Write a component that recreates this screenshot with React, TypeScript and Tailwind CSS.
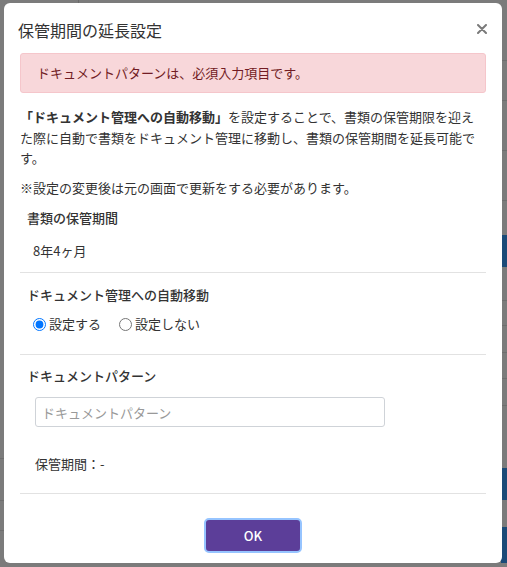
import React from "react";

export default function App() {
  return (
    <div className="relative w-[507px] h-[567px] overflow-hidden bg-[#7b7b7b] font-['Noto_Sans_CJK_JP','Noto_Sans',sans-serif] text-[#333]">
      {/* background page hints */}
      <div className="absolute left-[78px] top-0 w-px h-[3px] bg-[#6a6a6a]" />
      <div className="absolute right-0 top-[235px] w-[6px] h-[32px] bg-[#1b4a78]" />
      <div className="absolute right-0 top-[468px] w-[6px] h-[32px] bg-[#1b4a78]" />
      <div className="absolute right-0 top-[527px] w-[6px] h-[36px] bg-[#1b4a78]" />
      <div className="absolute right-0 top-[60px] w-[6px] h-px bg-[#6e6e6e]" />
      <div className="absolute right-0 top-[100px] w-[6px] h-px bg-[#6e6e6e]" />
      <div className="absolute right-0 top-[150px] w-[6px] h-px bg-[#6e6e6e]" />
      <div className="absolute right-0 top-[200px] w-[6px] h-px bg-[#6e6e6e]" />
      <div className="absolute right-0 top-[300px] w-[6px] h-px bg-[#6e6e6e]" />
      <div className="absolute right-0 top-[325px] w-[6px] h-px bg-[#6e6e6e]" />
      <div className="absolute right-0 top-[352px] w-[6px] h-px bg-[#6e6e6e]" />
      <div className="absolute right-0 top-[378px] w-[6px] h-px bg-[#6e6e6e]" />
      <div className="absolute right-0 top-[405px] w-[6px] h-px bg-[#6e6e6e]" />
      <div className="absolute left-0 top-[458px] w-[4px] h-px bg-[#6e6e6e]" />
      <div className="absolute left-0 top-[500px] w-[4px] h-px bg-[#6e6e6e]" />
      <div className="absolute left-0 top-[530px] w-[4px] h-px bg-[#6e6e6e]" />

      {/* modal */}
      <div className="relative ml-[4px] mt-[3px] w-[498px] h-[560px] bg-white rounded-[6px] flex flex-col">
        {/* header */}
        <div className="h-[50px] pl-[14px] pr-[15px] pt-[15px] flex justify-between items-start">
          <div className="text-[16px] leading-[24px] text-[#333]">保管期間の延長設定</div>
          <svg width="10" height="10" viewBox="0 0 10 10" className="mt-[5.5px]">
            <path d="M1 1 L9 9 M9 1 L1 9" stroke="#7a7a7a" strokeWidth="2" strokeLinecap="round" />
          </svg>
        </div>

        {/* body */}
        <div className="px-[16px] flex flex-col text-[13px]">
          <div className="h-[40px] border border-[#f5c6cb] bg-[#f8d7da] rounded-[3px] pl-[16px] flex items-center text-[#721c24] leading-[20px]">
            ドキュメントパターンは、必須入力項目です。
          </div>

          <p className="mt-[14px] leading-[20.5px] whitespace-nowrap">
            <span className="font-bold">「ドキュメント管理への自動移動」</span>を設定することで、書類の保管期限を迎え
            <br />
            た際に自動で書類をドキュメント管理に移動し、書類の保管期間を延長可能で
            <br />
            す。
          </p>

          <div className="mt-[9.5px] leading-[20px]">※設定の変更後は元の画面で更新をする必要があります。</div>

          <div className="mt-[10px] leading-[20px] pl-[7px] font-medium">書類の保管期間</div>
          <div className="mt-[12.5px] leading-[20px] pl-[13px]">8年4ヶ月</div>

          <div className="mt-[11.5px] h-px bg-[#e2e2e2]" />

          <div className="mt-[12px] leading-[20px] pl-[7px] font-medium">ドキュメント管理への自動移動</div>
          <div className="mt-[9px] h-[20px] pl-[13px] flex items-center">
            <label className="flex items-center">
              <input type="radio" name="auto" defaultChecked className="w-[13px] h-[13px] m-0" />
              <span className="ml-[3px]">設定する</span>
            </label>
            <label className="flex items-center ml-[18px]">
              <input type="radio" name="auto" className="w-[13px] h-[13px] m-0" />
              <span className="ml-[3px]">設定しない</span>
            </label>
          </div>

          <div className="mt-[20px] h-px bg-[#e2e2e2]" />

          <div className="mt-[11px] leading-[20px] pl-[7px] font-medium">ドキュメントパターン</div>
          <input
            type="text"
            placeholder="ドキュメントパターン"
            className="mt-[11px] ml-[15px] w-[350px] h-[30px] border border-[#cfd3d8] rounded-[3px] px-[6px] text-[13px] placeholder:text-[#999] outline-none"
          />

          <div className="mt-[27px] leading-[20px] pl-[15px]">保管期間：-</div>

          <div className="mt-[19px] h-px bg-[#e2e2e2]" />

          <div className="mt-[24px] flex justify-center">
            <button className="w-[98px] h-[35px] rounded-[5px] border-2 border-[#96c4ff] bg-[#5c3e99] text-white text-[13px] font-medium">
              OK
            </button>
          </div>
        </div>
      </div>
    </div>
  );
}
